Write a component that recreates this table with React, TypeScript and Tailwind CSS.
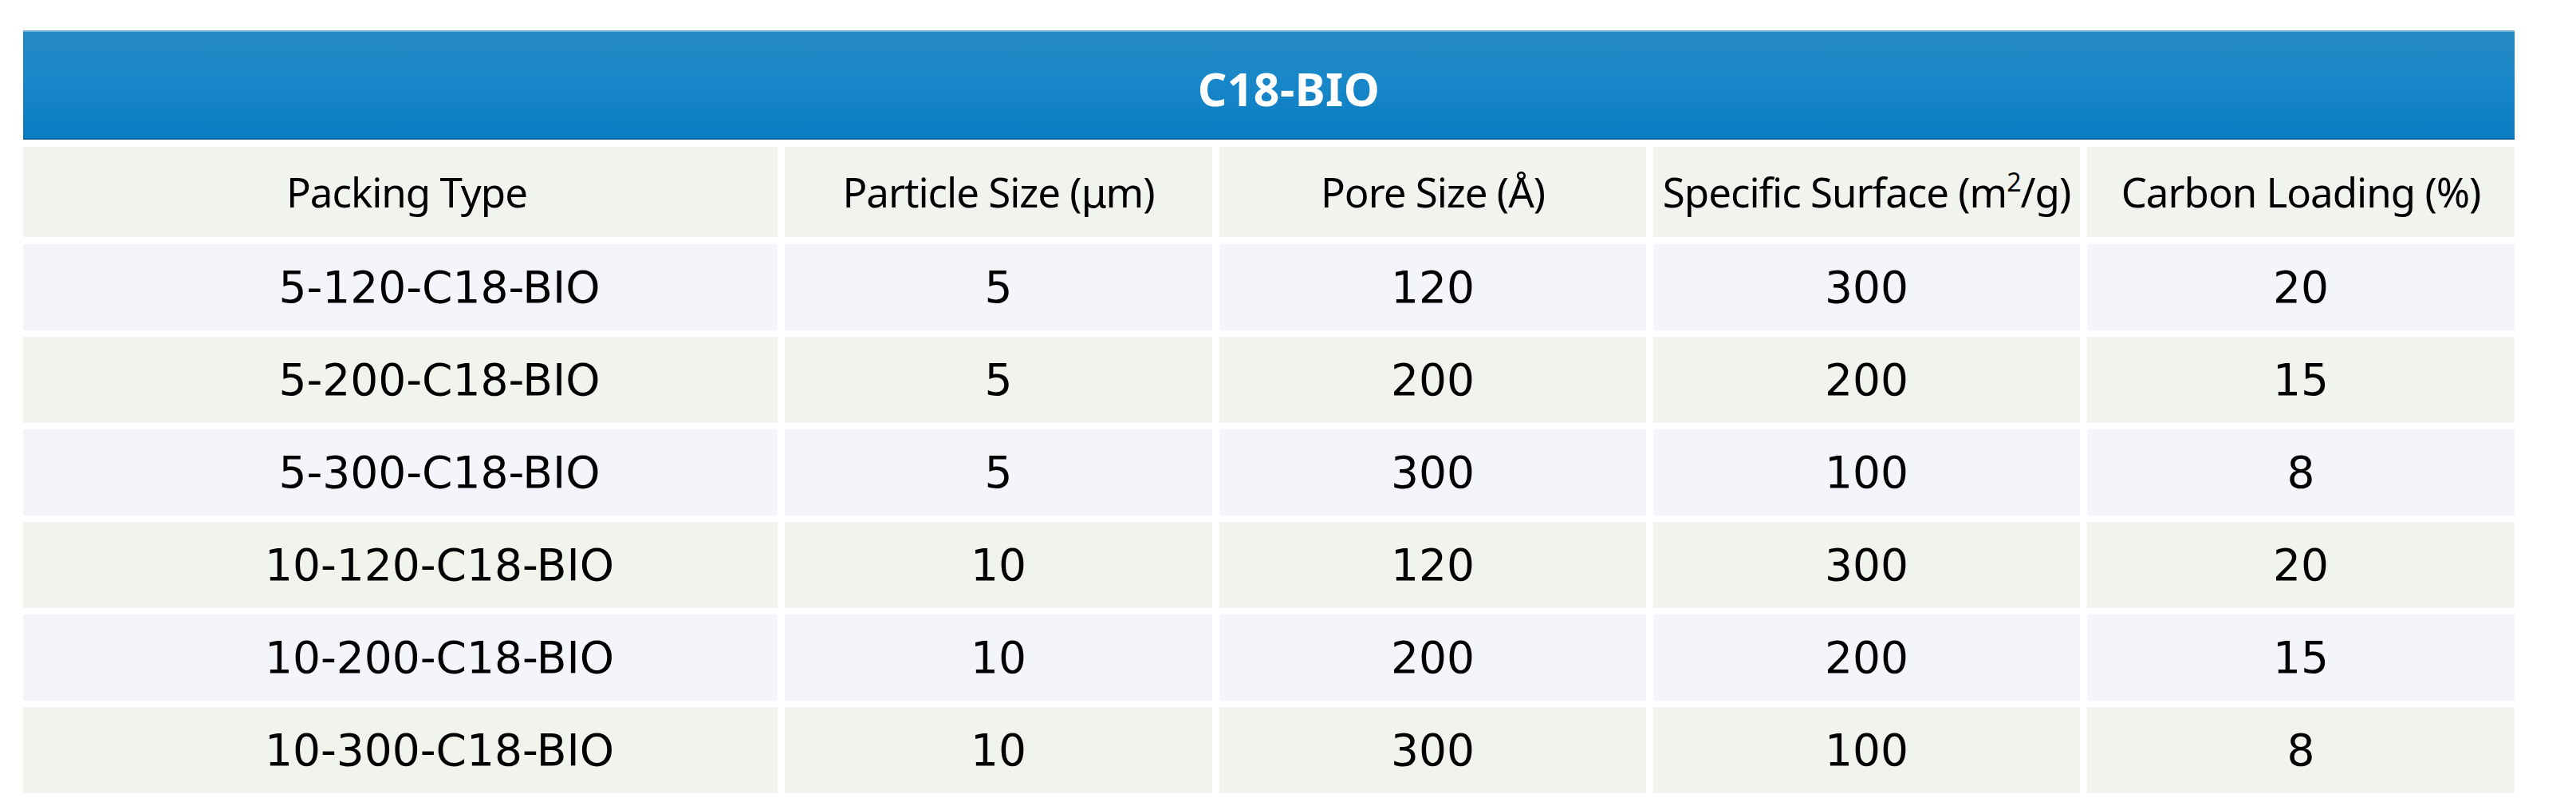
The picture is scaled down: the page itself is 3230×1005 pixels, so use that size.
const headers = [
  "Packing Type",
  "Particle Size (μm)",
  "Pore Size (Å)",
  "SURFACE",
  "Carbon Loading (%)",
];

const rows = [
  ["5-120-C18-BIO", "5", "120", "300", "20"],
  ["5-200-C18-BIO", "5", "200", "200", "15"],
  ["5-300-C18-BIO", "5", "300", "100", "8"],
  ["10-120-C18-BIO", "10", "120", "300", "20"],
  ["10-200-C18-BIO", "10", "200", "200", "15"],
  ["10-300-C18-BIO", "10", "300", "100", "8"],
];

const cols = "grid grid-cols-[946px_536px_535px_535px_536px] gap-x-[9px]";

export default function App() {
  return (
    <div className="min-h-screen w-full bg-white pt-[38px] pl-[29px]">
      <div className="w-[3124px]">
        {/* title bar */}
        <div className="h-[137px] flex items-center justify-center pl-[50px] pt-[11px] bg-gradient-to-b from-[#2589c3] via-[#1787c9] to-[#0a7bc1] border-t-2 border-t-[#6fb0d6] border-b-2 border-b-[#0a669e]">
          <span className="text-white text-[57px] font-bold font-['Noto_Sans',sans-serif] tracking-[0.5px]">
            C18-BIO
          </span>
        </div>

        {/* column headers */}
        <div className={`${cols} mt-[9px]`}>
          {headers.map((h, i) => (
            <div
              key={i}
              className={`h-[113px] bg-[#f1f4ee] flex items-center justify-center text-[51px] text-black font-['Noto_Sans',sans-serif] tracking-[-1px] ${i === 0 ? "pl-[16px]" : ""}`}
            >
              {h === "SURFACE" ? (
                <span>
                  Specific Surface (m<sup className="text-[32px] -top-[20px]">2</sup>/g)
                </span>
              ) : (
                h
              )}
            </div>
          ))}
        </div>

        {/* data rows */}
        <div className="flex flex-col gap-y-[8px] mt-[9px]">
          {rows.map((r, ri) => (
            <div key={ri} className={cols}>
              {r.map((c, ci) => (
                <div
                  key={ci}
                  className={`h-[108px] flex items-center justify-center text-[55px] text-black font-['DejaVu_Sans',sans-serif] ${
                    ri % 2 === 0 ? "bg-[#f4f5fb]" : "bg-[#f1f4ed]"
                  } ${ci === 0 ? "pl-[98px]" : ""}`}
                >
                  {c}
                </div>
              ))}
            </div>
          ))}
        </div>
      </div>
    </div>
  );
}
